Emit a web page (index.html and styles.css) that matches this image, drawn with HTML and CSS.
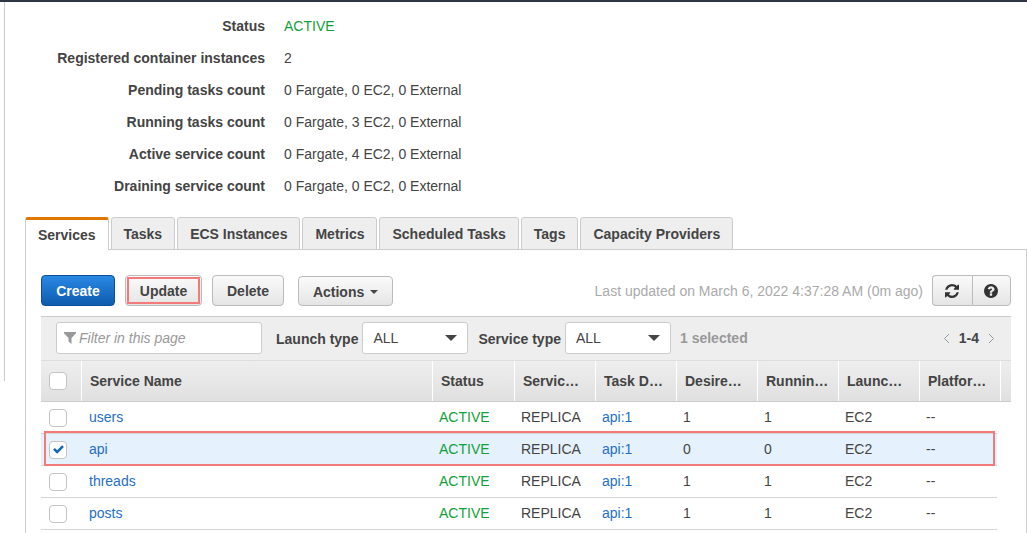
FILE: index.html
```html
<!DOCTYPE html>
<html lang="en">
<head>
    <meta charset="UTF-8">
    <title>Cluster services</title>
    <link rel="stylesheet" href="styles.css">
</head>
<body>
    <div class="topline"></div>

    <dl class="details">
        <dt>Status</dt><dd class="green">ACTIVE</dd>
        <dt>Registered container instances</dt><dd>2</dd>
        <dt>Pending tasks count</dt><dd>0 Fargate, 0 EC2, 0 External</dd>
        <dt>Running tasks count</dt><dd>0 Fargate, 3 EC2, 0 External</dd>
        <dt>Active service count</dt><dd>0 Fargate, 4 EC2, 0 External</dd>
        <dt>Draining service count</dt><dd>0 Fargate, 0 EC2, 0 External</dd>
    </dl>

    <div class="tabs">
        <a class="tab active">Services</a>
        <a class="tab">Tasks</a>
        <a class="tab">ECS Instances</a>
        <a class="tab">Metrics</a>
        <a class="tab">Scheduled Tasks</a>
        <a class="tab">Tags</a>
        <a class="tab">Capacity Providers</a>
    </div>

    <div class="panel">
        <div class="toolbar">
            <button class="btn primary">Create</button>
            <button class="btn marked">Update</button>
            <button class="btn">Delete</button>
            <button class="btn actions">Actions <span class="caret small"></span></button>
            <span class="updated">Last updated on March 6, 2022 4:37:28 AM (0m ago)</span>
            <div class="btn-group">
                <button class="btn icon">
                    <svg width="14" height="14" viewBox="0 0 1536 1536"><path d="M1511 928q0 5-1 7-64 268-268 434.5t-478 166.5q-146 0-282.5-55t-243.5-157l-129 129q-19 19-45 19t-45-19-19-45v-448q0-26 19-45t45-19h448q26 0 45 19t19 45-19 45l-137 137q71 66 161 102t187 36q134 0 250-65t186-179q11-17 53-117 8-23 30-23h192q13 0 22.5 9.5t9.5 22.5zm25-800v448q0 26-19 45t-45 19h-448q-26 0-45-19t-19-45 19-45l138-138q-148-137-349-137-134 0-250 65t-186 179q-11 17-53 117-8 23-30 23h-199q-13 0-22.5-9.5t-9.5-22.5v-7q65-268 270-434.5t480-166.5q146 0 284 55.5t245 156.5l130-129q19-19 45-19t45 19 19 45z"/></svg>
                </button>
                <button class="btn icon">
                    <svg width="14" height="14" viewBox="128 128 1536 1536"><path d="M1024 1376v-192q0-14-9-23t-23-9h-192q-14 0-23 9t-9 23v192q0 14 9 23t23 9h192q14 0 23-9t9-23zm256-672q0-88-55.5-163t-138.5-116-170-41q-243 0-371 213-15 24 8 42l132 100q7 6 19 6 16 0 25-12 53-68 86-92 34-24 86-24 48 0 85.5 26t37.5 59q0 38-20 61t-68 45q-63 28-115.5 86.5t-52.5 125.5v36q0 14 9 23t23 9h192q14 0 23-9t9-23q0-19 21.5-49.5t54.5-49.5q32-18 49-28.5t46-35 44.5-48 28-60.5 12.5-81zm384 192q0 209-103 385.5t-279.5 279.5-385.5 103-385.5-103-279.5-279.5-103-385.5 103-385.5 279.5-279.5 385.5-103 385.5 103 279.5 279.5 103 385.5z"/></svg>
                </button>
            </div>
        </div>

        <div class="filterbar">
            <div class="filter">
                <svg class="funnel" width="12" height="12" viewBox="0 0 12 12"><path d="M0 0h12v1.200L7.500 6v6L4.500 9.600V6L0 1.200z"/></svg>
                <span>Filter in this page</span>
            </div>
            <label class="filter-label">Launch type</label>
            <div class="select">ALL<span class="caret"></span></div>
            <label class="filter-label second">Service type</label>
            <div class="select">ALL<span class="caret"></span></div>
            <span class="selected-count">1 selected</span>
            <div class="pager">
                <svg width="7" height="11" viewBox="0 0 7 11"><path d="M6 1L1.500 5.500 6 10"/></svg>
                <b>1-4</b>
                <svg width="7" height="11" viewBox="0 0 7 11"><path d="M1 1l4.500 4.500L1 10"/></svg>
            </div>
        </div>

        <div class="grid-head">
            <div class="cell check"><span class="box"></span></div>
            <div class="cell">Service Name</div>
            <div class="cell">Status</div>
            <div class="cell">Service type</div>
            <div class="cell">Task Definition</div>
            <div class="cell">Desired tasks</div>
            <div class="cell">Running tasks</div>
            <div class="cell">Launch type</div>
            <div class="cell">Platform version</div>
            <div class="cell"></div>
        </div>

        <div class="grid-row">
            <div class="check"><span class="box"></span></div>
            <a>users</a><span class="green">ACTIVE</span><span>REPLICA</span><a>api:1</a><span>1</span><span>1</span><span>EC2</span><span>--</span>
        </div>
        <div class="grid-row picked">
            <div class="check"><span class="box">
                <svg width="11" height="9" viewBox="0 0 12 10"><path d="M0 5.200l2-2 2.500 2.500L10 0.200l2 2-7.500 7.600z"/></svg>
            </span></div>
            <a>api</a><span class="green">ACTIVE</span><span>REPLICA</span><a>api:1</a><span>0</span><span>0</span><span>EC2</span><span>--</span>
        </div>
        <div class="grid-row">
            <div class="check"><span class="box"></span></div>
            <a>threads</a><span class="green">ACTIVE</span><span>REPLICA</span><a>api:1</a><span>1</span><span>1</span><span>EC2</span><span>--</span>
        </div>
        <div class="grid-row">
            <div class="check"><span class="box"></span></div>
            <a>posts</a><span class="green">ACTIVE</span><span>REPLICA</span><a>api:1</a><span>1</span><span>1</span><span>EC2</span><span>--</span>
        </div>
    </div>
</body>
</html>
```

FILE: styles.css
```css
body {
    margin: 0;
    font-family: "Liberation Sans", Arial, sans-serif;
    font-size: 14px;
    color: #444;
    background: #fff linear-gradient(#ccc, #ccc) 4px 2px / 1px 379px no-repeat;
}

.topline {
    height: 2px;
    background-color: #2d3642;
}

.green {
    color: #12a03c;
}

/* cluster details */
.details {
    display: grid;
    grid-template-columns: 265px 1fr;
    grid-auto-rows: 32px;
    column-gap: 19px;
    align-items: center;
    margin: 8px 0 15px;
}

.details dt {
    font-weight: bold;
    text-align: right;
}

.details dd {
    margin: 0;
}

/* tabs */
.tabs {
    display: flex;
    gap: 2px;
    height: 33px;
    margin-left: 25px;
    position: relative;
    z-index: 1;
}

.tab {
    box-sizing: border-box;
    height: 33px;
    padding: 0 12px;
    line-height: 33px;
    font-weight: bold;
    background-color: #eee;
    border: 1px solid #ccc;
    border-radius: 3px 3px 0 0;
}

.tab.active {
    width: 83.5px;
    line-height: 31px;
    background-color: #fff;
    border-top: 3px solid #dd7700;
    border-bottom: none;
}

.panel {
    margin: -1px 0 0 25px;
    padding: 25px 15px 3px 15px;
    border: 1px solid #ccc;
    border-bottom: none;
}

/* toolbar */
.toolbar {
    display: flex;
    align-items: flex-end;
    height: 31px;
}

.btn {
    box-sizing: border-box;
    height: 31px;
    padding: 0 14px;
    font-family: inherit;
    font-size: 14px;
    font-weight: bold;
    color: #444;
    background: linear-gradient(#fafafa, #e5e5e5);
    border: 1px solid #bbb;
    border-radius: 4px;
}

.btn.primary {
    width: 74px;
    padding: 0;
    color: #fff;
    background: linear-gradient(#2a88e4, #0d5cae);
    border-color: #0b4f94;
}

.btn.marked {
    position: relative;
    width: 77px;
    margin-left: 10px;
    padding: 0;
}

/* red annotation drawn over the screenshot */
.btn.marked::after {
    content: "";
    position: absolute;
    inset: 1px;
    border: 2px solid #f47a7a;
}

.btn.marked + .btn {
    width: 72px;
    margin-left: 10px;
    padding: 0;
}

.btn.actions {
    width: 95px;
    height: 30px;
    margin-left: 14px;
    padding: 2px 0 0;
}

.updated {
    margin: 0 9px 7px auto;
    color: #aaa;
}

.btn-group {
    display: flex;
}

.btn.icon {
    display: flex;
    align-items: center;
    justify-content: center;
    width: 40px;
    padding: 0 1px 0 0;
}

.btn.icon:first-child {
    border-radius: 4px 0 0 4px;
    border-right: none;
}

.btn.icon:last-child {
    width: 39px;
    border-radius: 0 4px 4px 0;
}

.btn.icon svg {
    fill: #333;
}

.caret {
    display: inline-block;
    width: 0;
    height: 0;
    border-left: 6px solid transparent;
    border-right: 6px solid transparent;
    border-top: 6px solid #444;
}

.caret.small {
    margin: 0 0 3px 2px;
    border-width: 4px 4px 0;
    border-top-color: #444;
}

/* filter bar */
.filterbar {
    display: flex;
    align-items: center;
    height: 42px;
    margin-top: 10px;
    padding: 0 0 1px 15px;
    background-color: #eee;
    border-top: 1px solid #ccc;
    border-bottom: 1px solid #ddd;
}

.filter {
    display: flex;
    align-items: center;
    gap: 3px;
    box-sizing: border-box;
    width: 206px;
    height: 32px;
    padding-left: 7px;
    font-style: italic;
    color: #999;
    background-color: #fff;
    border: 1px solid #ccc;
    border-radius: 3px;
}

.funnel {
    fill: #999;
}

.filter-label {
    margin: 2px 4px 0 14px;
    font-weight: bold;
}

.filter-label.second {
    margin-left: 10px;
}

.select {
    display: flex;
    align-items: center;
    justify-content: space-between;
    box-sizing: border-box;
    width: 106px;
    height: 32px;
    padding: 0 10px;
    background-color: #fff;
    border: 1px solid #ccc;
    border-radius: 3px;
}

.selected-count {
    margin-left: 9px;
    font-weight: bold;
    color: #999;
}

.pager {
    display: flex;
    align-items: center;
    gap: 9px;
    margin: 0 16px 0 auto;
}

.pager svg {
    fill: none;
    stroke: #999;
}

/* services table */
.grid-head,
.grid-row {
    display: grid;
    grid-template-columns: 40px 351px 82px repeat(5, 81px) 1fr;
}

.grid-head {
    grid-template-columns: 40px 351px 82px repeat(6, 81px) 1fr;
    height: 40px;
    background: linear-gradient(#eee, #e0e0e0);
    border-bottom: 1px solid #ccc;
    font-weight: bold;
}

.cell {
    padding: 0 9px 0 8px;
    line-height: 40px;
    white-space: nowrap;
    overflow: hidden;
    text-overflow: ellipsis;
    border-left: 1px solid #fff;
}

.cell.check {
    padding: 0 0 0 8px;
    border-left: none;
}

.check {
    display: flex;
    align-items: center;
    padding-left: 8px;
}

.box {
    display: flex;
    align-items: center;
    justify-content: center;
    box-sizing: border-box;
    width: 18px;
    height: 18px;
    background-color: #fff;
    border: 1px solid #c4c4c4;
    border-radius: 4px;
}

.box svg {
    fill: #1166bb;
}

.grid-row {
    width: 956px;
    height: 31px;
    line-height: 31px;
    border-bottom: 1px solid #d5d5d5;
}

.grid-row > a,
.grid-row > span {
    padding-left: 7px;
}

.grid-row > a:nth-child(2) {
    padding-left: 8px;
}

.grid-row a {
    color: #1f6fc4;
}

.grid-row.picked {
    position: relative;
    background-color: #e5f1fc;
}

/* red annotation drawn over the screenshot */
.grid-row.picked::after {
    content: "";
    position: absolute;
    left: 3px;
    top: -3px;
    width: 951px;
    height: 35px;
    border: 2px solid #f47a7a;
    box-sizing: border-box;
}
```
